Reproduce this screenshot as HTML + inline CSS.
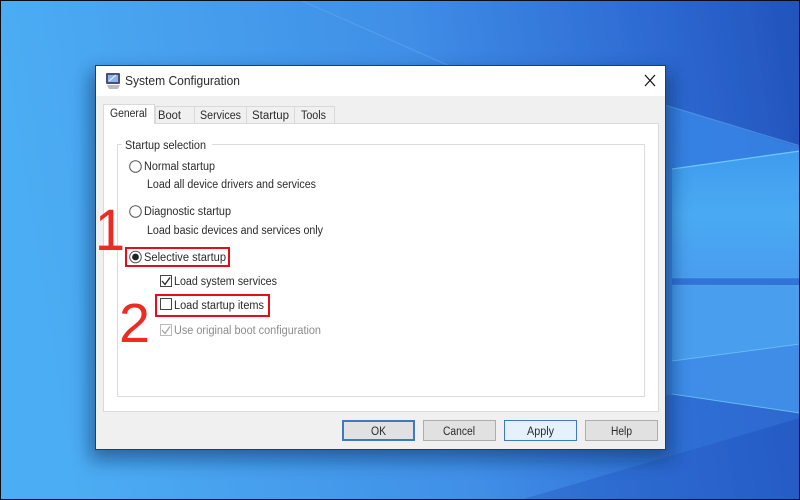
<!DOCTYPE html>
<html><head><meta charset="utf-8"><title>System Configuration</title>
<style>html,body{margin:0;padding:0;width:800px;height:500px;overflow:hidden;background:#000}svg{display:block}
text{font-family:"Liberation Sans",sans-serif;font-size:11.5px;fill:#2b2b2b}</style></head><body>
<svg width="800" height="500" viewBox="0 0 800 500" xmlns="http://www.w3.org/2000/svg">
<defs>
<linearGradient id="bg" x1="0" y1="0.1" x2="1" y2="0">
<stop offset="0" stop-color="#4cadf3"/><stop offset=".5" stop-color="#408fe7"/><stop offset=".8" stop-color="#2e6bd3"/><stop offset="1" stop-color="#2253bb"/></linearGradient>
<linearGradient id="pane" x1="0" y1="0" x2="0" y2="1"><stop offset="0" stop-color="#3f9bee"/><stop offset=".5" stop-color="#4aaaf2"/><stop offset="1" stop-color="#4a9df0"/></linearGradient>
<filter id="sh" x="-10%" y="-10%" width="120%" height="125%"><feGaussianBlur stdDeviation="9"/></filter>
<filter id="soft" x="0" y="0" width="100%" height="100%"><feGaussianBlur stdDeviation="0.35"/></filter>
</defs>
<g filter="url(#soft)">
<rect width="800" height="500" fill="url(#bg)"/>
<polygon points="300,0 800,222 800,148 665,105 520,97" fill="#3d86e6" opacity=".2"/>
<polygon points="665,105 800,147 800,152 672,169 665,169" fill="#3a88e8" opacity=".75"/>
<polygon points="672,169 800,151 800,278 672,278" fill="url(#pane)"/>
<polygon points="672,285 800,285 800,344 672,361" fill="#4a9eee"/>
<polygon points="672,361 800,344 800,413 672,394" fill="#3f8de8"/>
<rect x="665" y="278" width="135" height="6" fill="#3273da"/>
<rect x="665" y="169" width="7" height="226" fill="#3a85e2"/>
<polygon points="665,395 672,395 800,413 800,418 660,460 665,460" fill="#3070d6" opacity=".6"/>
<path d="M300 0L520 97M665 105L800 146" stroke="#5ea6f0" stroke-width="1.2" fill="none" opacity=".6"/>
<path d="M672 169L800 151" stroke="#6fc6f8" stroke-width="1.3"/>
<path d="M672 361L800 344M672 394L800 413" stroke="#66baf6" stroke-width="1"/>
<path d="M672 278H800M672 285H800" stroke="#5aa9ee" stroke-width="1" opacity=".5"/>
<polygon points="800,418 800,500 520,500" fill="#2358c0" opacity=".4"/>
<rect x="90" y="72" width="582" height="388" fill="#0b2f60" opacity=".55" filter="url(#sh)"/>
<rect x="0.5" y="0.5" width="799" height="499" fill="none" stroke="#0c0c14" stroke-width="1"/>

<!-- window -->
<rect x="95.5" y="65.5" width="570" height="384" fill="#f0f0f0" stroke="#1c3f66"/>
<rect x="96" y="66" width="569" height="30" fill="#fff"/>
<!-- app icon -->
<g>
<rect x="106" y="73" width="14" height="11" rx="1" fill="#4a4f78"/>
<rect x="108" y="75" width="10" height="7" fill="#8db4ea"/>
<path d="M109 81L116 75" stroke="#dbe9fb" stroke-width="1.2"/>
<path d="M107 85L120 85L118 89L109 89Z" fill="#b9bcc6"/>
</g>
<text x="125" y="85" style="font-size:12.5px" textLength="115" lengthAdjust="spacingAndGlyphs">System Configuration</text>
<path d="M645 75L655 86M655 75L645 86" stroke="#111" stroke-width="1.2" fill="none"/>

<!-- tabs -->
<g fill="#f0f0f0" stroke="#d9d9d9">
<rect x="155.500" y="106.500" width="39" height="18"/>
<rect x="194.500" y="106.500" width="52" height="18"/>
<rect x="246.500" y="106.500" width="48" height="18"/>
<rect x="294.500" y="106.500" width="40" height="18"/>
</g>
<rect x="103.500" y="123.500" width="555" height="288" fill="#fff" stroke="#d9d9d9"/>
<path d="M103.500 124V104.500H154.500V124" fill="#fff" stroke="#d9d9d9"/>
<rect x="104" y="122" width="50" height="3" fill="#fff"/>
<text x="110" y="117" textLength="37" lengthAdjust="spacingAndGlyphs">General</text>
<text x="158" y="119" textLength="23" lengthAdjust="spacingAndGlyphs">Boot</text>
<text x="200" y="119" textLength="41" lengthAdjust="spacingAndGlyphs">Services</text>
<text x="252" y="119" textLength="37" lengthAdjust="spacingAndGlyphs">Startup</text>
<text x="301" y="119" textLength="25" lengthAdjust="spacingAndGlyphs">Tools</text>

<!-- group -->
<rect x="117.500" y="144.500" width="527" height="252" fill="#fff" stroke="#dcdcdc"/>
<rect x="122" y="140" width="90" height="9" fill="#fff"/>
<text x="125" y="149" textLength="81" lengthAdjust="spacingAndGlyphs">Startup selection</text>

<!-- radios -->
<g fill="#fff" stroke="#555" stroke-width="1">
<circle cx="135.500" cy="166.500" r="5.800"/>
<circle cx="135.500" cy="211.500" r="5.800"/>
<circle cx="135.500" cy="257" r="5.800"/>
</g>
<circle cx="135.500" cy="257" r="3.400" fill="#222"/>
<text x="144" y="170" textLength="71" lengthAdjust="spacingAndGlyphs">Normal startup</text>
<text x="147" y="188" textLength="169" lengthAdjust="spacingAndGlyphs">Load all device drivers and services</text>
<text x="144" y="215" textLength="87" lengthAdjust="spacingAndGlyphs">Diagnostic startup</text>
<text x="147" y="234" textLength="176" lengthAdjust="spacingAndGlyphs">Load basic devices and services only</text>
<text x="144" y="261" textLength="82" lengthAdjust="spacingAndGlyphs">Selective startup</text>

<!-- checks -->
<rect x="160.500" y="275.500" width="11" height="11" fill="#fff" stroke="#444"/>
<path d="M162 281L165 284.500L170 277.500" fill="none" stroke="#222" stroke-width="1.300"/>
<text x="174" y="285" textLength="103" lengthAdjust="spacingAndGlyphs">Load system services</text>
<rect x="160.500" y="298.500" width="11" height="11" fill="#fff" stroke="#444"/>
<text x="174" y="309" textLength="90" lengthAdjust="spacingAndGlyphs">Load startup items</text>
<rect x="160.500" y="324.500" width="11" height="11" fill="#fff" stroke="#bbb"/>
<path d="M162 330L165 333.500L170 326.500" fill="none" stroke="#a5a5a5" stroke-width="1.300"/>
<text x="174" y="334" textLength="147" lengthAdjust="spacingAndGlyphs" style="fill:#8c8c8c">Use original boot configuration</text>

<!-- red annotations -->
<rect x="126" y="248" width="103" height="18" fill="none" stroke="#e60f17" stroke-width="2"/>
<rect x="156" y="295" width="113" height="21" fill="none" stroke="#e60f17" stroke-width="2"/>
<text x="95" y="250" style="font-size:58px;fill:#ee2a24" textLength="30" lengthAdjust="spacingAndGlyphs">1</text>
<text x="119" y="342" style="font-size:55px;fill:#ee2a24" textLength="31" lengthAdjust="spacingAndGlyphs">2</text>

<!-- buttons -->
<rect x="343" y="421" width="71" height="19" fill="#e1e1e1" stroke="#3f78c4" stroke-width="2"/>
<rect x="423.500" y="420.500" width="72" height="20" fill="#e1e1e1" stroke="#adadad"/>
<rect x="504.500" y="420.500" width="72" height="20" fill="#e5f1fb" stroke="#3f78c4"/>
<rect x="585.500" y="420.500" width="72" height="20" fill="#e1e1e1" stroke="#adadad"/>
<text x="371" y="435" textLength="15" lengthAdjust="spacingAndGlyphs">OK</text>
<text x="443" y="435" textLength="32" lengthAdjust="spacingAndGlyphs">Cancel</text>
<text x="527" y="435" textLength="27" lengthAdjust="spacingAndGlyphs">Apply</text>
<text x="611" y="435" textLength="21" lengthAdjust="spacingAndGlyphs">Help</text>
</g>
</svg>
</body></html>
